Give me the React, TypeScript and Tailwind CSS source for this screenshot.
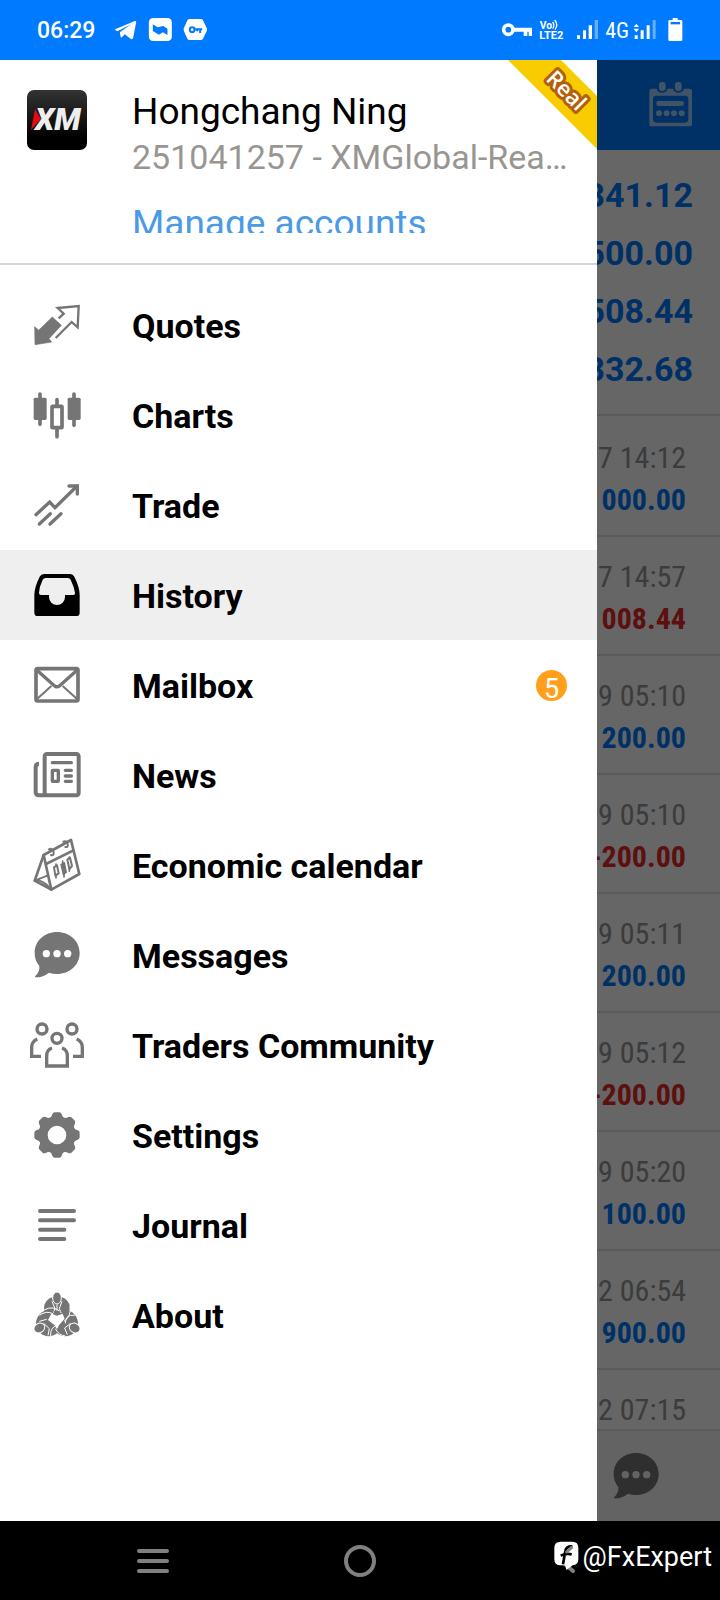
import React from 'react';

const ICON = '#757575';

interface MenuItem {
  label: string;
  icon: React.ReactNode;
  active?: boolean;
  badge?: number;
}

const Icon = ({ viewBox, children }: { viewBox: string; children: React.ReactNode }) => (
  <svg viewBox={viewBox} className="w-[60px] h-[60px] shrink-0" fill={ICON} stroke="none" aria-hidden="true">
    {children}
  </svg>
);

const QuotesIcon = () => (
  <Icon viewBox="81 15 180 180">
    <path d="M104 110 L116 121 L157 81 L184 106 L147 146 L155 156 L105 164 Z" stroke={ICON} strokeWidth="2" strokeLinejoin="round" />
    <path d="M176 85 L191 71 L173 54 L236 48 L233 112 L215 96 L167 144" fill="none" stroke={ICON} strokeWidth="7" />
  </Icon>
);

const ChartsIcon = () => (
  <Icon viewBox="81 285 180 180">
    <rect x="101" y="323" width="39" height="67" rx="5" />
    <rect x="203" y="323" width="39" height="67" rx="5" />
    <path d="M120 312V403M222 312V406M171 329V346M171 415V440" stroke={ICON} strokeWidth="11" strokeLinecap="round" />
    <rect x="156" y="349" width="30" height="64" rx="2" fill="none" stroke={ICON} strokeWidth="11" />
  </Icon>
);

const TradeIcon = () => (
  <Icon viewBox="81 555 180 180">
    <g fill="none" stroke={ICON} strokeWidth="10" strokeLinecap="round">
      <path d="M108 674 L149 636 L165 653 L231 588" />
      <path d="M118 702 L151 671 M150 702 L183 671" />
      <path d="M207 588H232V612" />
    </g>
  </Icon>
);

const HistoryIcon = () => (
  <Icon viewBox="81 75 180 180">
    <path
      fill="#000"
      fillRule="evenodd"
      d="M132 102H211Q219 102 223 110Q239 142 239 165V218Q239 228 229 228H113Q103 228 103 218V165Q103 142 119 110Q123 102 132 102ZM137 114Q131 114 128 119Q118 140 117 158Q117 165 123 165H147V171A24 24 0 0 0 195 171V165H220Q226 165 225 158Q222 140 212 119Q209 114 204 114Z"
    />
  </Icon>
);

const MailboxIcon = () => (
  <Icon viewBox="81 345 180 180">
    <g fill="none" stroke={ICON}>
      <rect x="108" y="386" width="126" height="97" rx="5" strokeWidth="11" />
      <path d="M111 391 L163 437 Q171 444 179 437 L231 391" strokeWidth="10" />
      <path d="M154 438 L111 477 M188 438 L231 477" strokeWidth="6" />
    </g>
  </Icon>
);

const NewsIcon = () => (
  <Icon viewBox="81 615 180 180">
    <g fill="none" stroke={ICON} strokeWidth="10" strokeLinecap="round">
      <rect x="134" y="642" width="102" height="124" rx="7" strokeWidth="12" />
      <path d="M117 671Q107 671 107 682V757Q107 766 118 766H138" strokeLinecap="butt" strokeWidth="12" />
      <path d="M157 668H214" />
      <path d="M196 691H214M196 708H214M196 724H214" />
      <rect x="157" y="691" width="18" height="33" rx="1" />
    </g>
  </Icon>
);

const CalendarStandIcon = () => (
  <Icon viewBox="81 45 180 180">
    <g fill="none" stroke={ICON} strokeWidth="8" strokeLinejoin="round" strokeLinecap="round">
      <path d="M131 105 L213 60 L238 162 L154 209 Z" />
      <path d="M131 105 L104 182 L154 209 M138 132 L219 92" />
      <path d="M104 182 L144 166 M106 180 Q128 180 151 205" strokeWidth="6" />
      <path d="M147 88 Q156 83 161 96 Q162 108 153 105 M190 65 Q199 60 203 72 Q205 83 196 81" strokeWidth="6" />
      <path d="M168 132V138M168 166V174M208 111V116M208 146V154" strokeWidth="5" />
      <path d="M162 142 L171 136 L176 160 L166 167 Z M202 119 L210 113 L216 138 L208 147 Z" strokeWidth="6" />
      <path d="M183 134 L193 128 L199 157 L190 164 Z" fill={ICON} strokeWidth="4" />
      <path d="M188 123V132M192 158V171" strokeWidth="5" />
    </g>
  </Icon>
);

const Bubble = ({ className, dots }: { className: string; dots: string }) => (
  <svg viewBox="81 315 180 180" className={className} fill={ICON} aria-hidden="true">
    <path d="M171 336C209 336 239 363 239 399C239 435 209 462 171 462Q158 462 147 458Q128 473 106 472Q103 471 106 468Q120 455 118 438Q104 422 104 399C104 363 133 336 171 336Z" />
    <circle cx="139" cy="401" r="11" fill={dots} />
    <circle cx="171" cy="401" r="11" fill={dots} />
    <circle cx="203" cy="401" r="11" fill={dots} />
  </svg>
);

const CommunityIcon = () => (
  <Icon viewBox="81 585 180 180">
    <g fill="none" stroke={ICON} strokeWidth="10">
      <circle cx="126" cy="627" r="15" />
      <circle cx="216" cy="627" r="15" />
      <circle cx="171" cy="655" r="15" />
      <path d="M112 657Q95 664 95 682V709H123M230 657Q247 664 247 682V709H219" />
      <path d="M156 684Q140 689 140 708V738H202V708Q202 689 186 684" />
    </g>
  </Icon>
);

const SettingsIcon = () => (
  <Icon viewBox="81 45 180 180">
    <circle cx="171" cy="135" r="42" fill="none" stroke={ICON} strokeWidth="28" />
    {[0, 45, 90, 135, 180, 225, 270, 315].map((angle) => (
      <path
        key={angle}
        transform={`rotate(${angle} 171 135)`}
        d="M149 86Q154 82 157 73Q159 67 164 67H178Q183 67 185 73Q188 82 193 86Z"
      />
    ))}
  </Icon>
);

const JournalIcon = () => (
  <Icon viewBox="81 315 180 180">
    <path d="M120 363H222M120 391H222M120 419H193M120 447H193" stroke={ICON} strokeWidth="12" strokeLinecap="round" />
  </Icon>
);

// three figures leaning into one circle
const AboutIcon = () => (
  <Icon viewBox="81 585 180 180">
    <ellipse cx="171" cy="655" rx="39" ry="36" />
    <ellipse cx="146" cy="700" rx="38" ry="39" />
    <ellipse cx="196" cy="700" rx="38" ry="39" />
    <path d="M154 671 L171 677 L188 671 L194 686 L178 704 L171 718 L164 706 L144 690 Z" fill="#fff" />
    <g fill="none" stroke="#fff" strokeWidth="3">
      <path d="M156 634 L165 656 L160 668 M186 634 L178 656 L183 668 M171 644V662" />
      <path d="M132 660Q160 644 184 668M118 676Q140 660 160 672M210 648Q214 680 192 694" />
      <path d="M224 676Q196 672 196 700M152 738Q150 708 176 706M196 738Q176 736 166 716" />
      <path d="M131 700 L148 716 L144 736M212 700 L194 714 L202 734M118 694 L140 688" />
    </g>
    <path d="M160 664H182L178 671H164ZM137 679L149 674L146 686ZM176 706L190 712L178 718Z" />
    <g stroke="#fff" strokeWidth="3">
      <ellipse cx="171" cy="624" rx="13" ry="18" />
      <ellipse cx="118" cy="714" rx="17" ry="14" transform="rotate(-30 118 714)" />
      <ellipse cx="224" cy="714" rx="17" ry="14" transform="rotate(30 224 714)" />
    </g>
  </Icon>
);

const MENU: MenuItem[] = [
  { label: 'Quotes', icon: <QuotesIcon /> },
  { label: 'Charts', icon: <ChartsIcon /> },
  { label: 'Trade', icon: <TradeIcon /> },
  { label: 'History', icon: <HistoryIcon />, active: true },
  { label: 'Mailbox', icon: <MailboxIcon />, badge: 5 },
  { label: 'News', icon: <NewsIcon /> },
  { label: 'Economic calendar', icon: <CalendarStandIcon /> },
  { label: 'Messages', icon: <Bubble className="w-[60px] h-[60px] shrink-0" dots="#fff" /> },
  { label: 'Traders Community', icon: <CommunityIcon /> },
  { label: 'Settings', icon: <SettingsIcon /> },
  { label: 'Journal', icon: <JournalIcon /> },
  { label: 'About', icon: <AboutIcon /> },
];

const TOTALS = ['341.12', '500.00', '508.44', '332.68'];

const DEALS = [
  { time: '7 14:12', amount: '000.00' },
  { time: '7 14:57', amount: '008.44', loss: true },
  { time: '9 05:10', amount: '200.00' },
  { time: '9 05:10', amount: '-200.00', loss: true },
  { time: '9 05:11', amount: '200.00' },
  { time: '9 05:12', amount: '-200.00', loss: true },
  { time: '9 05:20', amount: '100.00' },
  { time: '2 06:54', amount: '900.00' },
  { time: '2 07:15', amount: '' },
];

const StatusBar = () => (
  <header className="flex items-center h-[60px] shrink-0 px-[37px] bg-[#007aff] text-white">
    <span className="pt-[2px] text-[23px] leading-[28px] font-medium">06:29</span>
    <svg viewBox="340 0 290 180" className="w-[97px] h-[60px] ml-[18px]" fill="#fff" aria-hidden="true">
      <path d="M346 88L405 63Q410 62 409 67L400 113Q398 120 392 116L375 103L366 112Q363 114 362 109L360 97L394 73L353 94Q344 91 346 88Z" />
      <rect x="447" y="54" width="69" height="69" rx="13" />
      <path d="M459 73L473 82L490 78L503 86V105L489 97L477 104L459 93Z" fill="#007aff" />
      <path d="M569 57H603Q607 57 609 60L621 85Q622 88 621 92L609 117Q607 120 603 120H569Q565 120 563 117L552 92Q551 88 552 85L563 60Q565 57 569 57Z" />
      <circle cx="577" cy="89" r="7" fill="none" stroke="#007aff" strokeWidth="6" />
      <path d="M583 88H607M601 88V99M592 88V94" fill="none" stroke="#007aff" strokeWidth="6" />
    </svg>
    <div className="flex items-center ml-auto">
      <svg viewBox="420 0 294 180" className="w-[98px] h-[60px]" fill="#fff" aria-hidden="true">
        <circle cx="445" cy="89" r="14" fill="none" stroke="#fff" strokeWidth="11" />
        <path d="M459 83H516V108H506V95H502V108H491V95H459Z" />
        <text x="539" y="86" fontSize="31" fontWeight="700" fontFamily="Roboto, sans-serif">Vo</text>
        <path d="M578 66Q585 76 578 86M584 60Q596 74 585 89" fill="none" stroke="#fff" strokeWidth="4" />
        <text x="538" y="117" fontSize="33" fontWeight="700" fontFamily="Roboto, sans-serif">LTE2</text>
        <path d="M651 106H660V117H651ZM669 91H678V117H669ZM686 76H696V117H686Z" />
        <path d="M704 60H714V117H704Z" opacity="0.4" />
      </svg>
      <span className="ml-[7px] pt-[2px] text-[22px] leading-[28px] font-['Roboto_Condensed','Liberation_Sans_Narrow',Roboto,sans-serif]">4G</span>
      <svg viewBox="820 0 150 180" className="w-[50px] h-[60px] ml-[4px]" fill="#fff" aria-hidden="true">
        <path d="M822 81L830 71L838 81ZM822 86H838L830 97ZM825 106H834V117H825ZM843 91H852V117H843ZM861 76H870V117H861Z" />
        <path d="M879 60H888V117H879Z" opacity="0.4" />
        <path d="M939 54H954V60H964Q968 60 968 64V119Q968 123 964 123H930Q926 123 926 119V64Q926 60 930 60H939Z" />
        <path d="M933 66H961V73H933Z" fill="#007aff" />
      </svg>
    </div>
  </header>
);

const HistoryPage = () => (
  <div className="flex flex-col h-full bg-white">
    <div className="flex items-center justify-end h-[90px] shrink-0 pr-[27px] bg-[#007aff]">
      <button type="button" aria-label="Select period" className="opacity-65">
        <svg viewBox="866 66 135 141" className="w-[45px] h-[47px]" fill="#fff" aria-hidden="true">
          <path
            fillRule="evenodd"
            d="M877 86H892Q894 98 908 98T925 86H941Q944 98 957 98T974 86H990Q998 86 998 94V191Q998 199 990 199H878Q870 199 870 191V94Q870 86 877 86ZM891 107Q881 107 881 117V178Q881 188 891 188H977Q987 188 987 178V117Q987 107 977 107Z"
          />
          <rect x="899" y="66" width="20" height="27" rx="9" />
          <rect x="947" y="66" width="20" height="27" rx="9" />
          <rect x="891" y="123" width="83" height="15" rx="7" />
          <circle cx="899" cy="160" r="9" />
          <circle cx="922" cy="160" r="9" />
          <circle cx="944" cy="160" r="9" />
          <circle cx="967" cy="160" r="9" />
        </svg>
      </button>
    </div>
    <div className="shrink-0 pt-[16px] pb-[16px] pr-[27px] border-b-2 border-[#e4e4e4] text-right text-[34px] leading-[58px] font-bold text-[#007aff]">
      {TOTALS.map((total) => (
        <div key={total}>{total}</div>
      ))}
    </div>
    <ul className="flex-1 min-h-0 overflow-hidden pt-[2px] text-right text-[30px] leading-[42px] font-['Roboto_Condensed','Liberation_Sans_Narrow',Roboto,sans-serif]">
      {DEALS.map((deal, i) => (
        <li key={i} className="h-[119px] pt-[19px] pr-[34px] border-b-2 border-[#e4e4e4]">
          <div className="text-[#929699]">{deal.time}</div>
          <div className={deal.loss ? 'font-bold text-[#e62828]' : 'font-bold text-[#007aff]'}>{deal.amount}</div>
        </li>
      ))}
    </ul>
    <div className="flex items-center justify-end h-[92px] shrink-0 pr-[54px] border-t-2 border-[#e4e4e4] bg-[#f7f7f7]">
      <button type="button" aria-label="Messages">
        <Bubble className="w-[60px] h-[60px]" dots="#f7f7f7" />
      </button>
    </div>
  </div>
);

const Drawer = () => (
  <aside className="absolute inset-y-0 left-0 w-[calc(100%-123px)] overflow-hidden bg-white">
    <div className="flex items-start gap-[45px] pt-[30px] pb-[30px] pl-[27px] pr-[30px] border-b-2 border-[#d6d6d6]">
      <svg viewBox="0 0 60 60" className="w-[60px] h-[60px] shrink-0" role="img" aria-label="XM">
        <defs>
          <linearGradient id="xm" x1="0" y1="0" x2="0" y2="1">
            <stop offset="0" stopColor="#333" />
            <stop offset="0.8" stopColor="#000" />
          </linearGradient>
        </defs>
        <rect width="60" height="60" rx="7" fill="url(#xm)" />
        <path d="M8 19L14 29L4 40Z" fill="#e60a0a" />
        <text x="8" y="40" fontSize="31" fontWeight="900" fontStyle="italic" fill="#eee" fontFamily="Roboto, sans-serif">XM</text>
      </svg>
      <div className="min-w-0">
        <h1 className="text-[37px] leading-[44px] text-black">Hongchang Ning</h1>
        <p className="text-[34px] leading-[46px] text-[#999692] whitespace-nowrap">251041257 - XMGlobal-Rea…</p>
        <div className="h-[31px] mt-[22px] overflow-hidden">
          <a href="#accounts" className="block text-[37px] leading-[44px] text-[#4b9ae6]">Manage accounts</a>
        </div>
      </div>
    </div>
    <svg viewBox="0 0 89 89" className="absolute top-0 right-0 w-[89px] h-[89px]">
      <path d="M0 0H53L89 36V89Z" fill="#f8cc00" />
      <text
        x="58"
        y="38"
        transform="rotate(45 58 31)"
        textAnchor="middle"
        fontSize="22"
        fontWeight="600"
        fontFamily="'Open Sans', sans-serif"
        fill="#fff"
        stroke="#b45f0a"
        strokeWidth="6"
        strokeLinejoin="round"
        paintOrder="stroke"
      >
        Real
      </text>
    </svg>
    <nav className="pt-[15px]">
      {MENU.map((item) => (
        <a
          key={item.label}
          href={`#${item.label}`}
          className={`flex items-center gap-[45px] h-[90px] pl-[27px] pr-[30px] text-[34px] leading-[40px] font-bold text-black ${item.active ? 'bg-[#efefef]' : ''}`}
        >
          {item.icon}
          <span className="pt-[2px]">{item.label}</span>
          {item.badge && (
            <span className="ml-auto w-[31px] h-[31px] rounded-full bg-[#ff9f1c] text-center text-[27px] leading-[38px] font-normal text-white">
              {item.badge}
            </span>
          )}
        </a>
      ))}
    </nav>
  </aside>
);

const SystemNav = () => (
  <footer className="relative grid grid-cols-3 items-center justify-items-center h-[79px] shrink-0 px-[50px] bg-black">
    <button type="button" aria-label="Recent apps">
      <svg viewBox="0 0 34 26" className="w-[34px] h-[26px]" stroke="#808080" strokeWidth="4" strokeLinecap="round" aria-hidden="true">
        <path d="M3 3H31M3 13H31M3 23H31" />
      </svg>
    </button>
    <button type="button" aria-label="Home" className="w-[32px] h-[32px] rounded-full border-4 border-[#808080]" />
    <button type="button" aria-label="Back">
      <svg viewBox="0 0 20 26" className="w-[20px] h-[26px]" fill="none" stroke="#808080" strokeWidth="4" strokeLinecap="round" aria-hidden="true">
        <path d="M15 3L4 13L16 23" />
      </svg>
    </button>
    <div className="absolute top-[19px] right-[8px] flex items-center gap-[4px] text-white">
      <svg viewBox="158 640 75 96" className="w-[25px] h-[32px]" aria-hidden="true">
        <path d="M178 642H213Q231 642 231 660V695Q231 712 214 713L195 727L192 713H177Q159 713 159 695V660Q159 642 178 642Z" fill="#fff" />
        <path d="M213 656Q194 655 192 670L185 710M178 684Q194 676 211 680" fill="none" stroke="#000" strokeWidth="8" />
        <path d="M211 659L196 673" fill="none" stroke="#808080" strokeWidth="9" strokeLinecap="round" />
      </svg>
      <span className="text-[27px] leading-[34px]">@FxExpert</span>
    </div>
  </footer>
);

export default function App() {
  return (
    <div className="flex flex-col h-screen overflow-hidden font-[Roboto,sans-serif]">
      <StatusBar />
      <main className="relative flex-1 min-h-0">
        <HistoryPage />
        <div className="absolute inset-0 bg-black/60" />
        <Drawer />
      </main>
      <SystemNav />
    </div>
  );
}
